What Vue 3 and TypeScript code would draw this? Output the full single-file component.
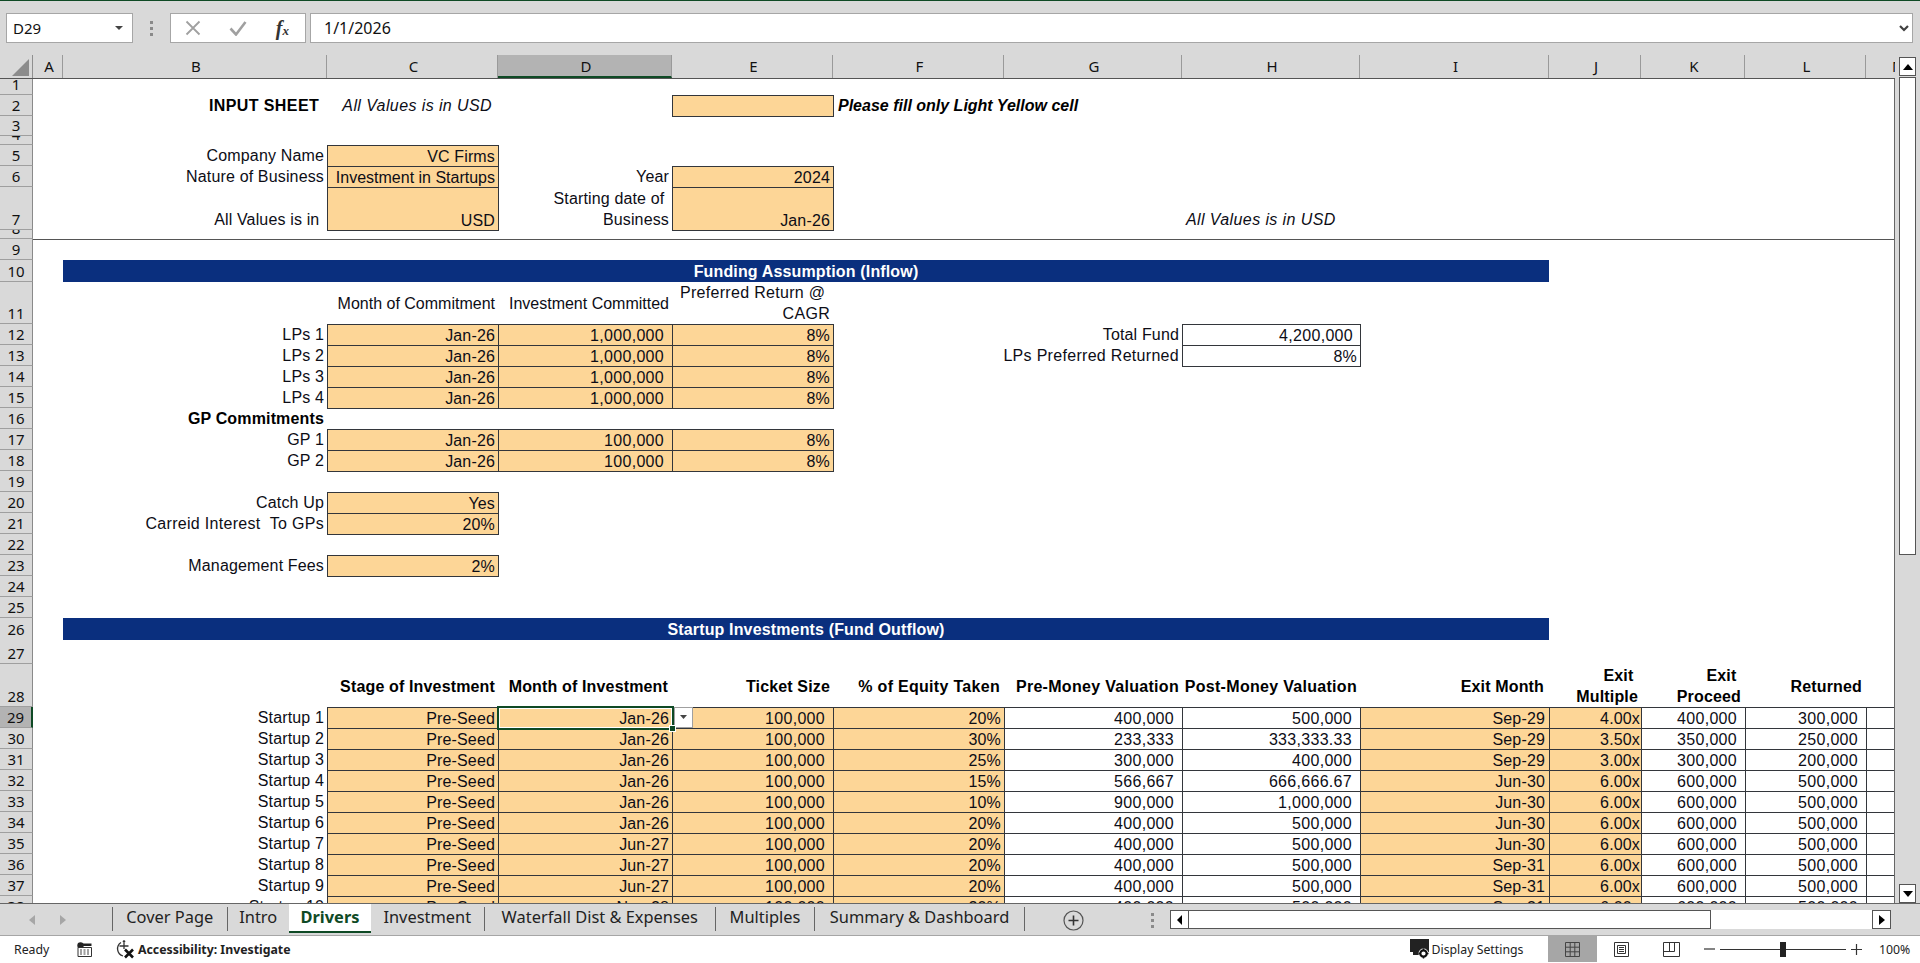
<script setup lang="ts">
interface Cell {
  c: number
  t?: string
  span?: number
  k?: string
}
interface Row {
  n: string
  h: number
  cells: Cell[]
  sel?: boolean
}

const F = 'b fill'
const W = 'b'
const cols = ['A', 'B', 'C', 'D', 'E', 'F', 'G', 'H', 'I', 'J', 'K', 'L', 'M']

const startup = (
  i: number,
  month: string,
  eq: string,
  pre: string,
  post: string,
  exit: string,
  mult: string,
  proc: string,
  ret: string,
): Row => ({
  n: String(28 + i),
  h: 21,
  sel: i === 1,
  cells: [
    { c: 2, t: `Startup ${i}` },
    { c: 3, t: 'Pre-Seed', k: F },
    { c: 4, t: month, k: `${F} p4` },
    { c: 5, t: '100,000', k: `${F} p9` },
    { c: 6, t: eq, k: `${F} p4` },
    { c: 7, t: pre, k: `${W} p9` },
    { c: 8, t: post, k: `${W} p9` },
    { c: 9, t: exit, k: `${F} p5` },
    { c: 10, t: mult, k: `${F} p2` },
    { c: 11, t: proc, k: `${W} p9` },
    { c: 12, t: ret, k: `${W} p9` },
    { c: 13, k: W },
  ],
})

const fundRow = (n: string, label: string, amt: string, extra: Cell[] = []): Row => ({
  n,
  h: 21,
  cells: [
    { c: 2, t: label },
    { c: 3, t: 'Jan-26', k: F },
    { c: 4, t: amt, k: `${F} p9` },
    { c: 5, t: '8%', k: F },
    ...extra,
  ],
})

const empty = (n: string, h = 21, cells: Cell[] = []): Row => ({ n, h, cells })

const rows: Row[] = [
  empty('1', 16),
  empty('2', 21, [
    { c: 2, t: 'INPUT SHEET ', k: 'bold ls4' },
    { c: 3, t: 'All Values is in USD', k: 'ital ls4 p6' },
    { c: 5, k: F },
    { c: 6, span: 3, t: 'Please fill only Light Yellow cell', k: 'bold ital left ls0' },
  ]),
  empty('3', 20),
  empty('4', 9),
  empty('5', 21, [
    { c: 2, t: 'Company Name' },
    { c: 3, t: 'VC Firms', k: F },
  ]),
  empty('6', 21, [
    { c: 2, t: 'Nature of Business' },
    { c: 3, t: 'Investment in Startups', k: `${F} ls0` },
    { c: 4, t: 'Year' },
    { c: 5, t: '2024', k: F },
  ]),
  empty('7', 43, [
    { c: 2, t: 'All Values is in ' },
    { c: 3, t: 'USD', k: F },
    { c: 4, t: 'Starting date of \nBusiness' },
    { c: 5, t: 'Jan-26', k: F },
    { c: 8, t: 'All Values is in USD', k: 'ital left ls4 p-l4' },
  ]),
  empty('8', 9),
  empty('9', 21, [{ c: 1, span: 13, k: 'topline' }]),
  empty('10', 22, [{ c: 2, span: 8, t: 'Funding Assumption (Inflow)', k: 'bar' }]),
  empty('11', 42, [
    { c: 3, t: 'Month of Commitment', k: 'mid ls0' },
    { c: 4, t: 'Investment Committed', k: 'mid ls0' },
    { c: 5, t: 'Preferred Return @ \nCAGR', k: 'ls3' },
  ]),
  fundRow('12', 'LPs 1', '1,000,000', [
    { c: 7, t: 'Total Fund' },
    { c: 8, t: '4,200,000', k: `${W} p8` },
  ]),
  fundRow('13', 'LPs 2', '1,000,000', [
    { c: 7, t: 'LPs Preferred Returned', k: 'ls3' },
    { c: 8, t: '8%', k: W },
  ]),
  fundRow('14', 'LPs 3', '1,000,000'),
  fundRow('15', 'LPs 4', '1,000,000'),
  empty('16', 21, [{ c: 2, t: 'GP Commitments', k: 'bold' }]),
  fundRow('17', 'GP 1', '100,000'),
  fundRow('18', 'GP 2', '100,000'),
  empty('19'),
  empty('20', 21, [
    { c: 2, t: 'Catch Up' },
    { c: 3, t: 'Yes', k: F },
  ]),
  empty('21', 21, [
    { c: 2, t: 'Carreid Interest  To GPs', k: 'ls3' },
    { c: 3, t: '20%', k: F },
  ]),
  empty('22'),
  empty('23', 21, [
    { c: 2, t: 'Management Fees' },
    { c: 3, t: '2%', k: F },
  ]),
  empty('24'),
  empty('25'),
  empty('26', 21, [{ c: 2, span: 8, t: 'Startup Investments (Fund Outflow)', k: 'bar low' }]),
  empty('27', 25),
  empty('28', 43, [
    { c: 3, t: 'Stage of Investment', k: 'bold mid' },
    { c: 4, t: 'Month of Investment', k: 'bold mid p4' },
    { c: 5, t: 'Ticket Size', k: 'bold mid' },
    { c: 6, t: '% of Equity Taken', k: 'bold mid p4 ls3' },
    { c: 7, t: 'Pre-Money Valuation', k: 'bold mid ls3' },
    { c: 8, t: 'Post-Money Valuation', k: 'bold mid ls3' },
    { c: 9, t: 'Exit Month', k: 'bold mid p5' },
    { c: 10, t: 'Exit \nMultiple', k: 'bold' },
    { c: 11, t: 'Exit \nProceed', k: 'bold p4' },
    { c: 12, t: 'Returned', k: 'bold mid p4' },
  ]),
  startup(1, 'Jan-26', '20%', '400,000', '500,000', 'Sep-29', '4.00x', '400,000', '300,000'),
  startup(2, 'Jan-26', '30%', '233,333', '333,333.33', 'Sep-29', '3.50x', '350,000', '250,000'),
  startup(3, 'Jan-26', '25%', '300,000', '400,000', 'Sep-29', '3.00x', '300,000', '200,000'),
  startup(4, 'Jan-26', '15%', '566,667', '666,666.67', 'Jun-30', '6.00x', '600,000', '500,000'),
  startup(5, 'Jan-26', '10%', '900,000', '1,000,000', 'Jun-30', '6.00x', '600,000', '500,000'),
  startup(6, 'Jan-26', '20%', '400,000', '500,000', 'Jun-30', '6.00x', '600,000', '500,000'),
  startup(7, 'Jun-27', '20%', '400,000', '500,000', 'Jun-30', '6.00x', '600,000', '500,000'),
  startup(8, 'Jun-27', '20%', '400,000', '500,000', 'Sep-31', '6.00x', '600,000', '500,000'),
  startup(9, 'Jun-27', '20%', '400,000', '500,000', 'Sep-31', '6.00x', '600,000', '500,000'),
  startup(10, 'Nov-28', '20%', '400,000', '500,000', 'Sep-31', '6.00x', '600,000', '500,000'),
]

const tabs = [
  { t: 'Cover Page', w: 114.5 },
  { t: 'Intro', w: 62.5 },
  { t: 'Drivers', w: 82, active: true },
  { t: 'Investment', w: 112.5 },
  { t: 'Waterfall Dist & Expenses', w: 231.5 },
  { t: 'Multiples', w: 99 },
  { t: 'Summary & Dashboard', w: 211 },
]

const px = (n: number) => `${n}px`
const place = (c: Cell) => ({ gridColumn: `${c.c + 1} / span ${c.span ?? 1}` })
</script>

<template>
  <div class="app">
    <header class="formula">
      <div class="namebox">
        <span>D29</span>
        <svg class="tri" width="9" height="5" viewBox="0 0 9 5"><path d="M0 0h8L4 4z" fill="#444" /></svg>
      </div>
      <div class="grip"><i></i><i></i><i></i></div>
      <div class="fx-group">
        <svg width="16" height="16" viewBox="0 0 16 16"><path d="M1.5 1.5l13 13M14.5 1.5l-13 13" stroke="#a0a0a0" stroke-width="1.8" fill="none" /></svg>
        <svg width="18" height="16" viewBox="0 0 18 16"><path d="M1.5 8.5l5.5 6L16.5 2" stroke="#a0a0a0" stroke-width="2.6" fill="none" /></svg>
        <span class="fx">f<small>x</small></span>
      </div>
      <div class="finput">
        <span>1/1/2026</span>
        <svg width="10" height="7" viewBox="0 0 10 7"><path d="M1 1l4 4 4-4" stroke="#404040" stroke-width="2.2" fill="none" /></svg>
      </div>
    </header>

    <div class="workspace">
      <div class="sheet">
        <div class="colhead">
          <div class="corner"><svg width="17" height="17" viewBox="0 0 17 17"><path d="M17 0v17H0z" fill="#8c8c8c" /></svg></div>
          <div v-for="c in cols" :key="c" class="ch" :class="{ on: c === 'D', clip: c === 'M' }">{{ c }}</div>
        </div>
        <div class="body">
          <div v-for="r in rows" :key="r.n" class="row" :style="{ height: px(r.h) }">
            <div class="rh" :class="{ on: r.sel }"><span>{{ r.n }}</span></div>
            <div v-for="(c, i) in r.cells" :key="i" class="cell" :class="c.k" :style="place(c)">
              <span v-if="c.t">{{ c.t }}</span>
              <template v-if="r.sel && c.c === 4">
                <div class="selbox"></div>
                <div class="handle"></div>
                <div class="dd"><svg width="7" height="5" viewBox="0 0 7 5"><path d="M0 0h7L3.500 4z" fill="#444" /></svg></div>
              </template>
            </div>
          </div>
        </div>
      </div>
      <aside class="vscroll">
        <div class="sbtn up"><svg width="10" height="6" viewBox="0 0 10 6"><path d="M0 6h10L5 0z" fill="#000" /></svg></div>
        <div class="vthumb"></div>
        <div class="sbtn down"><svg width="10" height="6" viewBox="0 0 10 6"><path d="M0 0h10L5 6z" fill="#000" /></svg></div>
      </aside>
    </div>

    <nav class="tabbar">
      <div class="tabnav">
        <svg width="6" height="10" viewBox="0 0 6 10"><path d="M6 0v10L0 5z" fill="#a6a6a6" /></svg>
        <svg width="6" height="10" viewBox="0 0 6 10"><path d="M0 0v10l6-5z" fill="#a6a6a6" /></svg>
      </div>
      <div
        v-for="t in tabs"
        :key="t.t"
        class="tab"
        :class="{ active: t.active }"
        :style="{ width: px(t.w) }"
      >{{ t.t }}</div>
      <svg class="plus" width="21" height="21" viewBox="0 0 21 21">
        <circle cx="10.500" cy="10.500" r="9.500" fill="none" stroke="#555" stroke-width="1.200" />
        <path d="M10.500 5.500v10M5.500 10.500h10" stroke="#333" stroke-width="1.600" />
      </svg>
      <div class="grip g2"><i></i><i></i><i></i></div>
      <div class="hscroll">
        <div class="hbtn"><svg width="5" height="10" viewBox="0 0 5 10"><path d="M5 0v10L0 5z" fill="#000" /></svg></div>
        <div class="hthumb"></div>
        <div class="htrack"></div>
        <div class="hbtn r"><svg width="6" height="10" viewBox="0 0 6 10"><path d="M0 0v10l6-5z" fill="#000" /></svg></div>
      </div>
    </nav>

    <footer class="status">
      <span class="ready">Ready</span>
      <svg class="macro" width="15" height="15" viewBox="0 0 15 15">
        <circle cx="3.500" cy="3.500" r="3.200" fill="#222" />
        <path d="M6 1.500h8.500V4H6z" fill="#222" />
        <path d="M1 5.500h13.500v9H1z" fill="#fff" stroke="#333" />
        <path d="M3 8h2M6.500 8h2M10 8h2M3 10h2M6.500 10h2M10 10h2M3 12h2M6.500 12h2M10 12h2" stroke="#444" stroke-width="1" />
      </svg>
      <svg class="acc" width="21" height="20" viewBox="0 0 21 20">
        <path d="M6 3.500A7.500 7.500 0 0 0 8 17" fill="none" stroke="#333" stroke-width="1.300" />
        <circle cx="9" cy="2.500" r="1.300" fill="#333" />
        <path d="M4.500 7h9M9 4v6" stroke="#333" stroke-width="1.300" fill="none" />
        <path d="M10 10.500l8 8M18 10.500l-8 8" stroke="#111" stroke-width="2.600" fill="none" />
      </svg>
      <span class="acctext">Accessibility: Investigate</span>

      <div class="right">
        <svg class="disp" width="20" height="21" viewBox="0 0 20 21">
          <path d="M0 0h19v13H0z" fill="#222" />
          <path d="M3 13h8v3H3z" fill="#222" />
          <circle cx="13.500" cy="14.500" r="5" fill="#fff" />
          <circle cx="13.500" cy="14.500" r="3.200" fill="none" stroke="#111" stroke-width="2.200" />
          <path d="M13.500 9.500v10M8.500 14.500h10" stroke="#111" stroke-width="1.400" stroke-dasharray="1.800 6.400" />
        </svg>
        <span class="disptext">Display Settings</span>
        <div class="view on">
          <svg width="15" height="15" viewBox="0 0 15 15">
            <path d="M.5.500h14v14H.5zM.5 5.200h14M.5 9.800h14M5.200.5v14M9.800.5v14" fill="none" stroke="#444" />
          </svg>
        </div>
        <div class="view">
          <svg width="15" height="15" viewBox="0 0 15 15">
            <path d="M.5.500h14v14H.5z" fill="none" stroke="#333" />
            <path d="M3.500 3.500h8v8h-8z" fill="none" stroke="#333" />
            <path d="M5 5.500h5M5 7.500h5M5 9.500h5" stroke="#333" />
          </svg>
        </div>
        <div class="view">
          <svg width="17" height="15" viewBox="0 0 17 15">
            <path d="M.5.500h16v14H.5zM.5 9.500h11V.5M6.500.5v9" fill="none" stroke="#333" />
          </svg>
        </div>
        <div class="zoom">
          <svg width="11" height="2" viewBox="0 0 11 2"><path d="M0 1h11" stroke="#333" stroke-width="1.200" /></svg>
          <div class="slider"><div class="knob"></div></div>
          <svg width="11" height="11" viewBox="0 0 11 11"><path d="M0 5.500h11M5.500 0v11" stroke="#333" stroke-width="1.200" /></svg>
          <span class="pct">100%</span>
        </div>
      </div>
    </footer>
  </div>
</template>

<style>
html,
body {
  margin: 0;
  overflow: hidden;
  background: #fff;
}
</style>

<style scoped>
.app {
  width: 1920px;
  height: 963px;
  display: flex;
  flex-direction: column;
  overflow: hidden;
  background: #d9d9d9;
  color: #111;
  font-family: "Noto Sans", sans-serif;
}

/* formula bar */
.formula {
  flex: 0 0 55px;
  box-sizing: border-box;
  border-top: 1px solid #0f4a25;
  padding: 12px 6px 0 6px;
  display: flex;
  align-items: flex-start;
}
.namebox,
.fx-group,
.finput {
  box-sizing: border-box;
  height: 30px;
  background: #fff;
  border: 1px solid #a6a6a6;
  display: flex;
  align-items: center;
}
.namebox {
  width: 127px;
  padding: 0 8px 0 6px;
  justify-content: space-between;
  font-size: 15px;
}
.grip {
  width: 37px;
  display: flex;
  flex-direction: column;
  align-items: center;
  gap: 3px;
  padding-top: 8px;
}
.grip i {
  width: 3px;
  height: 3px;
  background: #8a8a8a;
}
.fx-group {
  width: 136px;
  padding: 0 16px 0 14px;
  justify-content: space-between;
}
.fx {
  font-family: "Liberation Serif", serif;
  font-style: italic;
  font-weight: 700;
  font-size: 20px;
  color: #333;
  line-height: 1;
}
.fx small {
  font-size: 13px;
}
.finput {
  margin-left: 4px;
  width: 1603px;
  padding: 0 3px 0 13px;
  justify-content: space-between;
  font-size: 16px;
}

/* sheet */
.workspace {
  flex: 0 0 848px;
  display: flex;
}
.sheet {
  width: 1895px;
}
.colhead,
.row {
  display: grid;
  grid-template-columns: 33px 30px 264px 171px 174px 161px 171px 178px 178px 189px 92px 104px 121px 29px;
}
.colhead {
  height: 24px;
  box-sizing: border-box;
  border-bottom: 1px solid #555;
}
.corner {
  display: flex;
  justify-content: flex-end;
  align-items: flex-start;
  padding: 4px 3px 0 0;
  border-right: 1px solid #8f8f8f;
}
.ch {
  box-sizing: border-box;
  padding-left: 3px;
  text-align: center;
  font-size: 15px;
  line-height: 23px;
  border-right: 1px solid #9a9a9a;
}
.ch.on {
  background: #b3b3b3;
  border-bottom: 2px solid #0f4a25;
  height: 23px;
  margin-bottom: -1px;
}
.ch.clip {
  text-align: left;
  padding-left: 26px;
  overflow: hidden;
  border-right: 0;
}
.body {
  box-sizing: border-box;
  height: 824px;
  overflow: hidden;
  background: #fff;
  border-right: 1px solid #666;
}
.rh {
  grid-column: 1;
  box-sizing: border-box;
  background: #d9d9d9;
  border-right: 1px solid #8a8a8a;
  border-bottom: 1px solid #9f9f9f;
  height: 100%;
  overflow: hidden;
  display: flex;
  align-items: flex-end;
  justify-content: center;
  font-size: 15px;
  line-height: 20px;
  position: relative;
  z-index: 3;
}
.rh.on {
  background: #b3b3b3;
  border-right: 2px solid #0f4a25;
}
.rh span {
  flex: none;
}
.cell {
  grid-row: 1;
  min-width: 0;
  box-sizing: border-box;
  display: flex;
  align-items: flex-end;
  justify-content: flex-end;
  padding-right: 3px;
  font-family: "Liberation Sans", Arial, sans-serif;
  font-size: 16px;
  line-height: 21px;
  letter-spacing: 0.15px;
  text-align: right;
  white-space: pre;
  color: #0d0d16;
  position: relative;
}
.bold {
  font-weight: 700;
  color: #000;
}
.ital {
  font-style: italic;
}
.left {
  justify-content: flex-start;
  text-align: left;
  padding-left: 5px;
}
.p-l4 {
  padding-left: 4px;
}
.mid {
  align-items: center;
}
.bold.mid {
  padding-top: 2px;
}
.p2 { padding-right: 2px; }
.p4 { padding-right: 4px; }
.p5 { padding-right: 5px; }
.p6 { padding-right: 6px; }
.p8 { padding-right: 8px; letter-spacing: 0.3px; }
.p9 { padding-right: 9px; letter-spacing: 0.3px; }
.ls0 { letter-spacing: 0; }
.ls3 { letter-spacing: 0.3px; }
.ls4 { letter-spacing: 0.4px; }
.b {
  border: 1px solid #33363b;
  margin: 0 -1px -1px 0;
  background: #fff;
  line-height: 19px;
}
.b.p2 { padding-right: 1px; }
.b.p4 { padding-right: 3px; }
.b.p5 { padding-right: 4px; }
.b.p8 { padding-right: 7px; }
.b.p9 { padding-right: 8px; }
.fill {
  background: #fdd697;
}
.bar {
  background: #0a2f7e;
  color: #fff;
  font-weight: 700;
  justify-content: center;
  align-items: center;
  padding: 0;
  line-height: 21px;
}
.bar.low {
  padding-top: 1px;
}
.topline {
  border-top: 1px solid #555;
}
.selbox {
  position: absolute;
  left: -2px;
  top: -2px;
  right: -2px;
  bottom: -2px;
  border: 2px solid #0f4a25;
  box-shadow: inset 0 0 0 1px #fff;
  z-index: 2;
  pointer-events: none;
}
.handle {
  position: absolute;
  right: -4px;
  bottom: -4px;
  width: 5px;
  height: 5px;
  background: #0f4a25;
  border: 1px solid #fff;
  z-index: 4;
}
.dd {
  position: absolute;
  left: 100%;
  top: -1px;
  margin-left: 2px;
  width: 19px;
  height: 21px;
  box-sizing: border-box;
  background: #fff;
  border: 1px solid #a0a0a0;
  display: flex;
  align-items: center;
  justify-content: center;
  z-index: 3;
}

/* vertical scrollbar */
.vscroll {
  flex: 1;
  display: flex;
  flex-direction: column;
  padding: 2px 4px 0 4px;
  gap: 1px;
}
.sbtn {
  box-sizing: border-box;
  height: 19px;
  background: #fff;
  border: 1px solid #555;
  display: flex;
  align-items: center;
  justify-content: center;
}
.vthumb {
  box-sizing: border-box;
  height: 478px;
  background: #fff;
  border: 1px solid #555;
}
.down {
  margin-top: auto;
}

/* tabs */
.tabbar {
  flex: 0 0 33px;
  box-sizing: border-box;
  border-top: 1px solid #666;
  border-bottom: 1px solid #a6a6a6;
  display: flex;
  align-items: flex-start;
}
.tabnav {
  box-sizing: border-box;
  width: 112px;
  height: 31px;
  padding: 0 46px 0 29px;
  display: flex;
  justify-content: space-between;
  align-items: center;
  border-right: 0;
}
.tab {
  box-sizing: border-box;
  height: 24px;
  margin-top: 3px;
  line-height: 20px;
  text-align: center;
  font-size: 16.400px;
  color: #222;
  border-left: 1px solid #666;
  white-space: nowrap;
}
.tab.active {
  margin-top: 0;
  height: 29px;
  line-height: 26px;
  background: #fff;
  font-weight: 700;
  color: #0f4a25;
  border-left: 0;
  border-bottom: 2px solid #0f4a25;
}
.tab.active + .tab {
  border-left: 0;
}
.tab:nth-of-type(8) {
  border-right: 1px solid #666;
}
.plus {
  margin: 6px 0 0 38px;
}
.g2 {
  width: auto;
  margin-left: 67px;
  padding-top: 9px;
}
.hscroll {
  margin-left: auto;
  margin-right: 29px;
  margin-top: 6px;
  width: 721px;
  height: 19px;
  display: flex;
}
.hbtn {
  box-sizing: border-box;
  width: 19px;
  height: 19px;
  background: #fff;
  border: 1px solid #555;
  display: flex;
  align-items: center;
  justify-content: center;
}
.hthumb {
  box-sizing: border-box;
  width: 522px;
  background: #fff;
  border: 1px solid #555;
  border-left: 0;
}
.htrack {
  flex: 1;
  background: #fff;
}

/* status */
.status {
  flex: 1;
  background: #fff;
  display: flex;
  align-items: center;
  font-size: 12.300px;
  color: #222;
  padding-bottom: 1px;
}
.ready {
  margin-left: 14px;
  width: 63px;
}
.macro {
  margin-right: 23px;
}
.acc {
  margin-right: 2px;
}
.acctext {
  font-weight: 700;
}
.right {
  margin-left: auto;
  margin-right: 11px;
  display: flex;
  align-items: center;
}
.disp {
  margin-right: 2px;
}
.disptext {
  width: 116px;
}
.view {
  width: 49.500px;
  height: 26px;
  display: flex;
  align-items: center;
  justify-content: center;
}
.view.on {
  background: #a6a6a6;
}
.zoom {
  display: flex;
  align-items: center;
  margin-left: 8px;
}
.slider {
  width: 126px;
  height: 1px;
  background: #333;
  margin: 0 5px;
  position: relative;
}
.knob {
  position: absolute;
  left: 60px;
  top: -7px;
  width: 6px;
  height: 15px;
  background: #222;
}
.pct {
  margin-left: 17px;
  width: 30px;
}
</style>
